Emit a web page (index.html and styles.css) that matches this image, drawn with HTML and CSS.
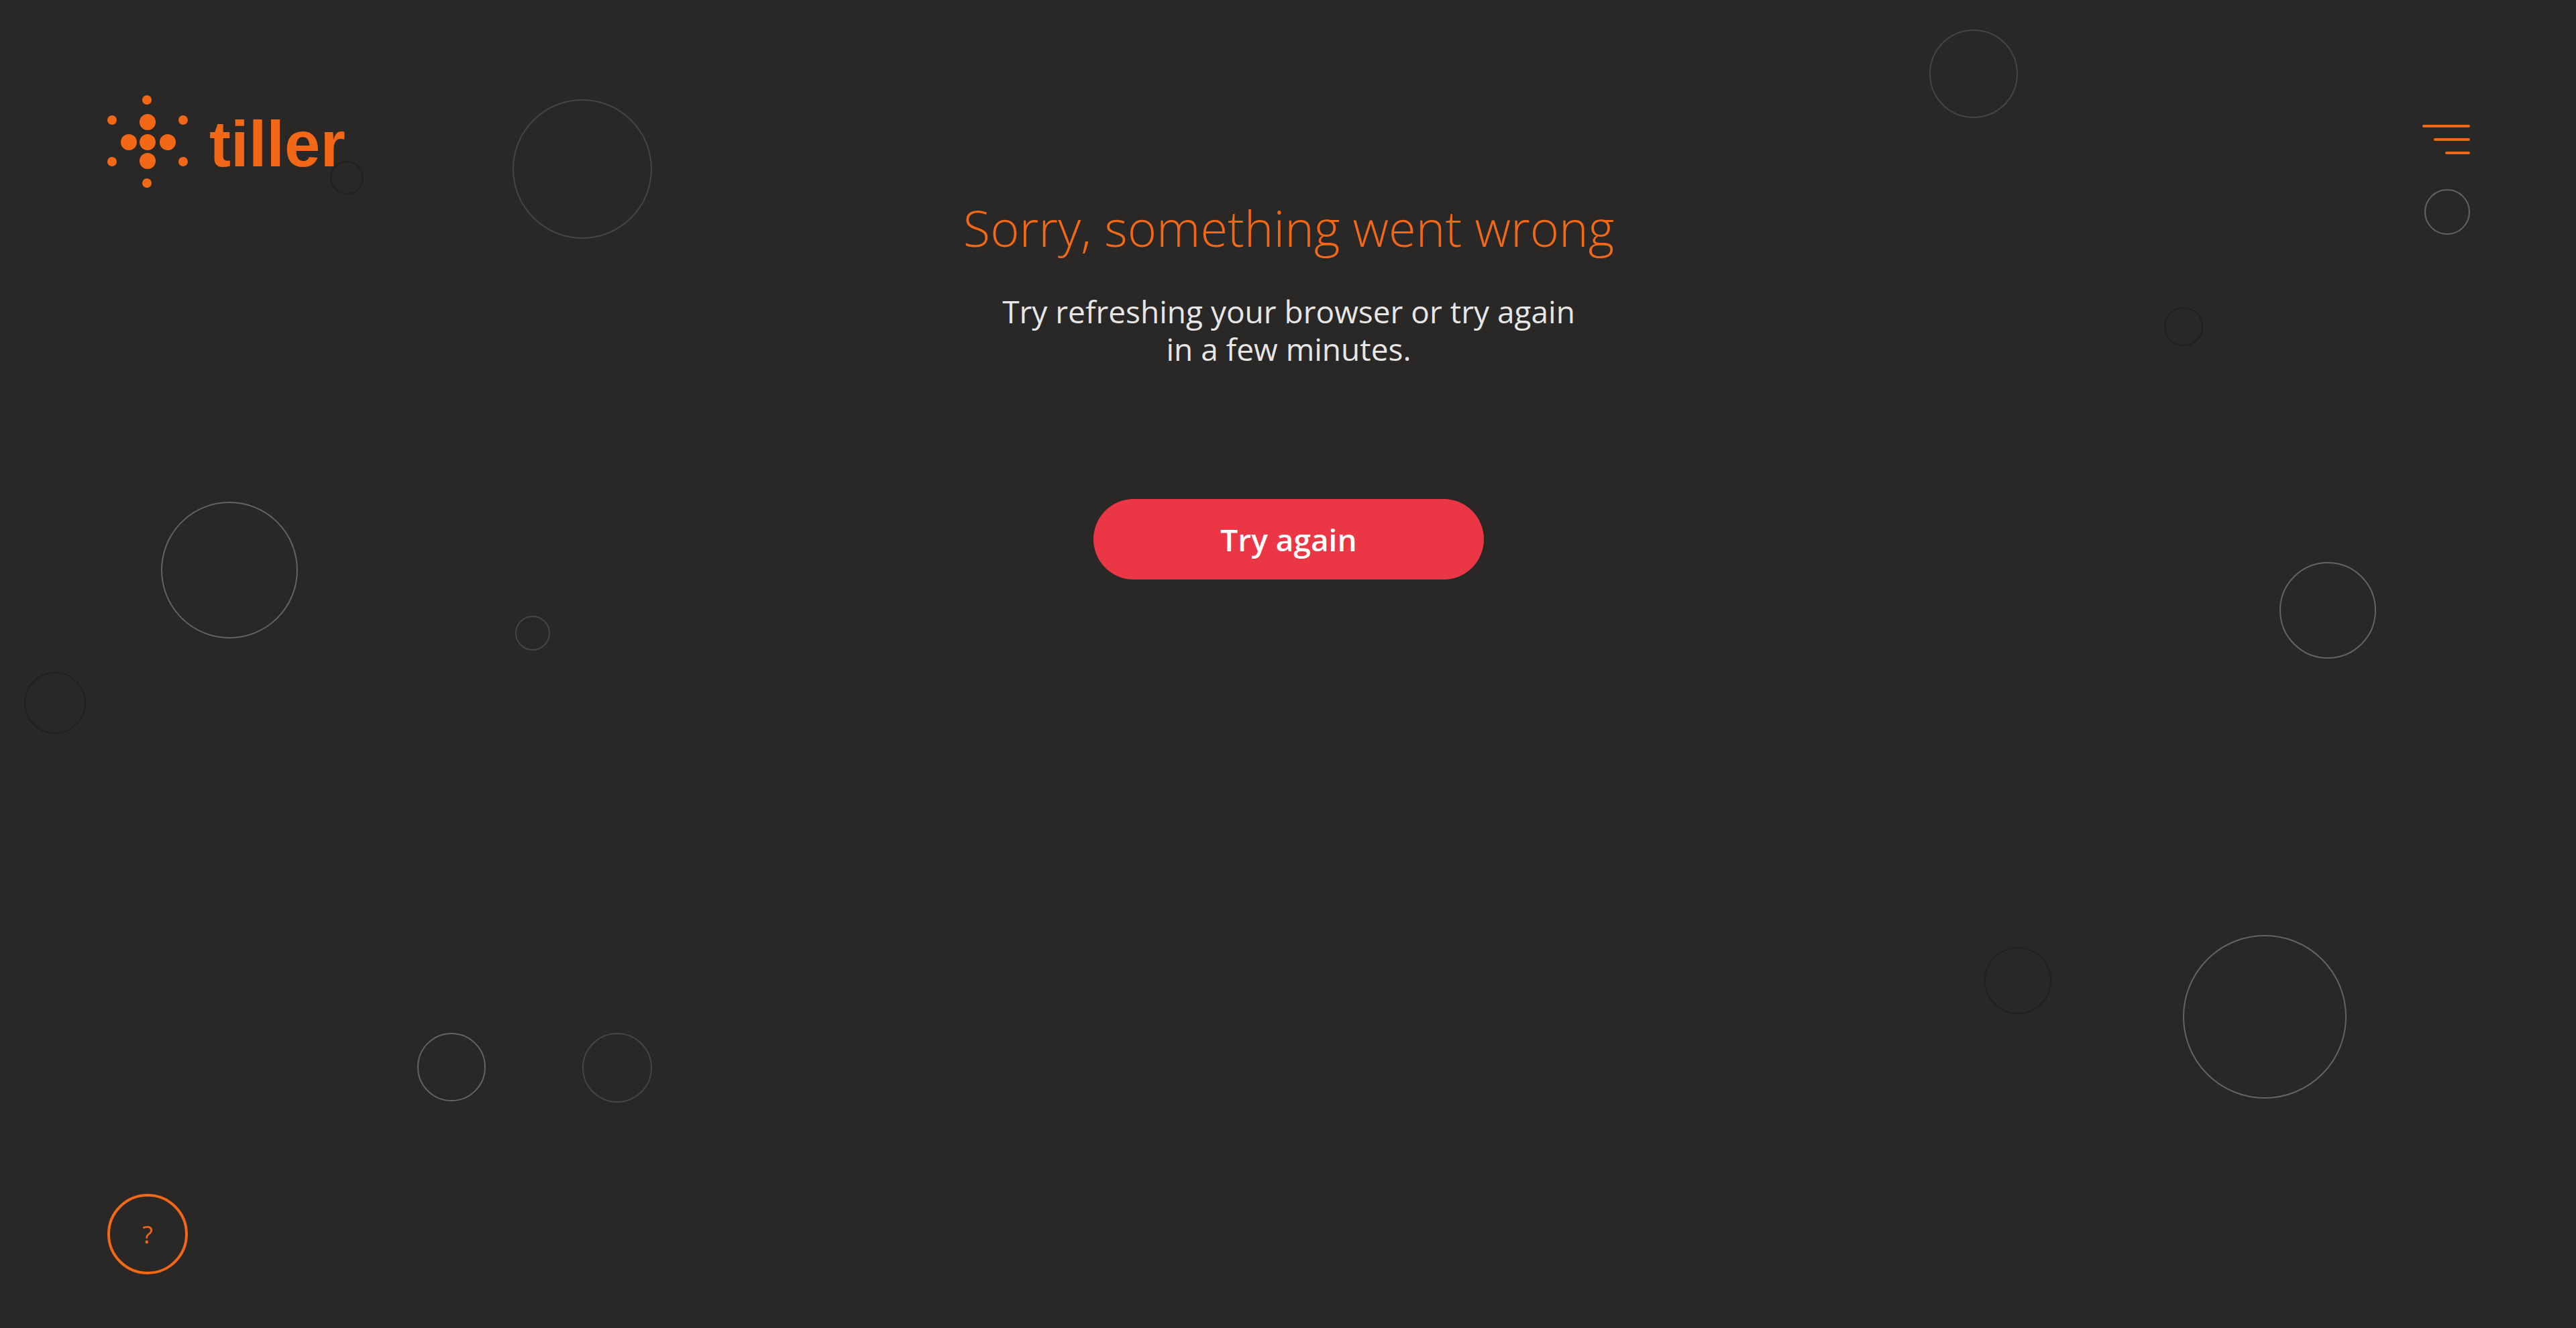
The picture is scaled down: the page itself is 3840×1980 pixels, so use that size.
FILE: index.html
```html
<!DOCTYPE html>
<html lang="en">
<head>
  <meta charset="utf-8">
  <meta name="viewport" content="width=device-width, initial-scale=1">
  <title>Tiller</title>
  <link rel="stylesheet" href="styles.css">
</head>
<body>
  <div class="bubbles" aria-hidden="true">
    <span class="bubble mid b1"></span>
    <span class="bubble dark b2"></span>
    <span class="bubble bright b3"></span>
    <span class="bubble mid b4"></span>
    <span class="bubble dark b5"></span>
    <span class="bubble bright b6"></span>
    <span class="bubble mid b7"></span>
    <span class="bubble mid b8"></span>
    <span class="bubble bright b9"></span>
    <span class="bubble dark b10"></span>
    <span class="bubble bright b11"></span>
    <span class="bubble dark b12"></span>
    <span class="bubble bright b13"></span>
  </div>
  <div class="page">
    <header class="header">
      <a class="logo" href="#">
        <svg class="logo-mark" width="120" height="138" viewBox="0 0 120 138" aria-hidden="true">
          <circle cx="59" cy="7" r="7"/>
          <circle cx="7" cy="37" r="7"/>
          <circle cx="113" cy="37" r="7"/>
          <circle cx="7" cy="99" r="7"/>
          <circle cx="113" cy="99" r="7"/>
          <circle cx="59" cy="131" r="7"/>
          <circle cx="60" cy="40" r="12"/>
          <circle cx="32" cy="70" r="12"/>
          <circle cx="60" cy="70" r="12"/>
          <circle cx="90" cy="70" r="12"/>
          <circle cx="60" cy="98" r="12"/>
        </svg>
        <span class="logo-name">tiller</span>
      </a>
      <button class="menu" type="button" aria-label="Menu">
        <span class="bar bar-long"></span>
        <span class="bar bar-medium"></span>
        <span class="bar bar-short"></span>
      </button>
    </header>
    <main class="message">
      <h1 class="title">Sorry, something went wrong</h1>
      <p class="text">Try refreshing your browser or try again<br>in a few minutes.</p>
      <button class="retry" type="button">Try again</button>
    </main>
    <footer class="footer">
      <button class="help" type="button" aria-label="Help">?</button>
    </footer>
  </div>
</body>
</html>
```
FILE: styles.css
```css
* {
  box-sizing: border-box;
}

body {
  margin: 0;
  background: #292826;
  color: #e6e6e6;
  font-family: "Open Sans", "Noto Sans", sans-serif;
}

button {
  margin: 0;
  padding: 0;
  border: 0;
  background: none;
  font-family: inherit;
  cursor: pointer;
}

.page {
  position: relative;
  display: flex;
  flex-direction: column;
  min-height: 100vh;
  padding: 142px 158px 80px 160px;
}

.header {
  display: flex;
  justify-content: space-between;
  align-items: flex-start;
}

.logo {
  display: flex;
  gap: 32px;
  color: #f26816;
  text-decoration: none;
}

.logo-mark {
  display: block;
  fill: currentColor;
}

.logo-name {
  padding-top: 8px;
  font: bold 96px/130px "Liberation Sans", sans-serif;
}

.menu {
  display: flex;
  flex-direction: column;
  align-items: flex-end;
  gap: 16px;
  padding-top: 44px;
}

.bar {
  height: 4px;
  border-radius: 2px;
  background: #f26816;
}

.bar-long {
  width: 71px;
}

.bar-medium {
  width: 54px;
}

.bar-short {
  width: 37px;
}

.message {
  display: flex;
  flex: 1;
  flex-direction: column;
  align-items: center;
  padding-top: 16px;
  text-align: center;
}

.title {
  margin: 0;
  color: #f26816;
  font-size: 74px;
  font-weight: 300;
  line-height: 88px;
}

.text {
  margin: 52px 0 0;
  font-size: 46px;
  line-height: 56px;
}

.retry {
  width: 582px;
  height: 120px;
  margin-top: 196px;
  border-radius: 60px;
  background: #eb3745;
  color: #fff;
  font-size: 46px;
  font-weight: 600;
}

.footer {
  display: flex;
}

.help {
  width: 120px;
  height: 120px;
  border: 4px solid #f26816;
  border-radius: 50%;
  color: #f26816;
  font-size: 36px;
}

.bubbles {
  position: absolute;
  inset: 0;
  overflow: hidden;
}

.bubble {
  position: absolute;
  border: 2px solid;
  border-radius: 50%;
  aspect-ratio: 1;
}

.bright {
  border-color: #656462;
}

.mid {
  border-color: #464543;
}

.dark {
  border-color: #21201e;
}

.b1 { top: 148px; left: 764px; width: 208px; }
.b2 { top: 240px; left: 492px; width: 50px; }
.b3 { top: 748px; left: 240px; width: 204px; }
.b4 { top: 918px; left: 768px; width: 52px; }
.b5 { top: 1002px; left: 36px; width: 92px; }
.b6 { top: 1540px; left: 622px; width: 102px; }
.b7 { top: 1540px; left: 868px; width: 104px; }
.b8 { top: 44px; right: 832px; width: 132px; }
.b9 { top: 282px; right: 158px; width: 68px; }
.b10 { top: 458px; right: 556px; width: 58px; }
.b11 { top: 838px; right: 298px; width: 144px; }
.b12 { top: 1412px; right: 782px; width: 100px; }
.b13 { top: 1394px; right: 342px; width: 244px; }
```
